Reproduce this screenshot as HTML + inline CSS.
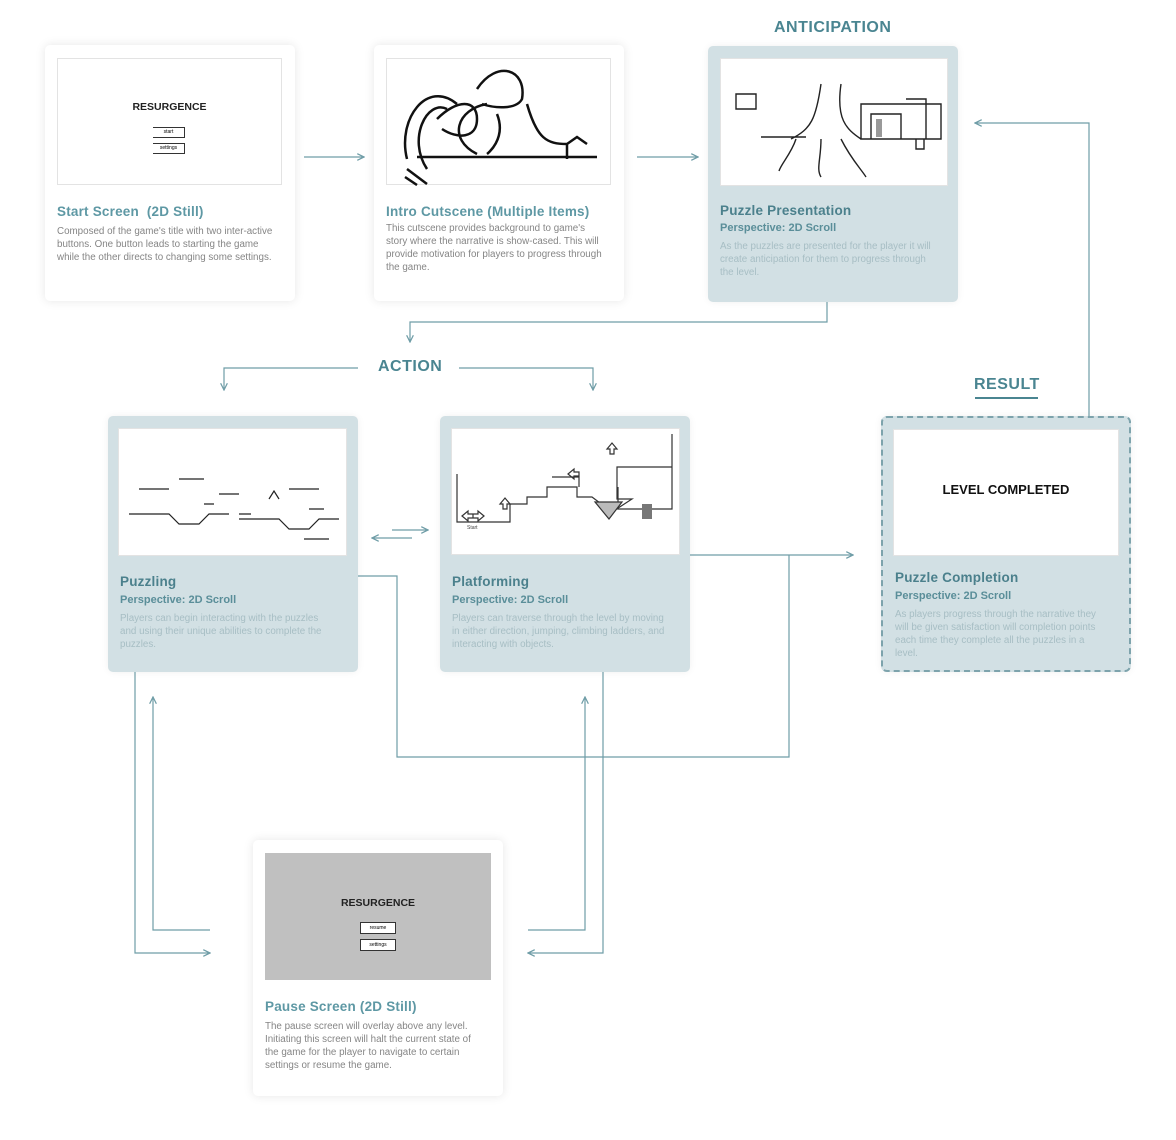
<!DOCTYPE html>
<html><head><meta charset="utf-8"><style>
*{margin:0;padding:0;box-sizing:border-box}
body{width:1176px;height:1140px;background:#fff;position:relative;font-family:"Liberation Sans",sans-serif;overflow:hidden}
.card{position:absolute;width:250px;height:256px;border-radius:5px;background:#fff;box-shadow:0 0 10px rgba(0,0,0,.1)}
.blue{background:#d2e0e4;box-shadow:0 0 8px rgba(0,0,0,.06)}
.img{position:absolute;background:#fff;border:1px solid #e3e3e3}
.t{position:absolute;left:12px;font-size:13.5px;font-weight:bold;color:#5e98a4;letter-spacing:.2px}
.blue .t{color:#4b808c}
.p{position:absolute;left:12px;font-size:9.8px;line-height:13px;color:#858585;width:222px}
.blue .p{color:#a7bec4;width:214px}
.s{position:absolute;left:12px;font-size:11px;font-weight:bold;color:#5a8e99}
.h{position:absolute;font-size:16px;font-weight:bold;color:#4a8591;letter-spacing:.5px}
svg.ov{position:absolute;left:0;top:0}
</style></head><body>

<div class="card" style="left:45px;top:45px">
 <div class="img" style="left:12px;top:13px;width:225px;height:127px">
  <div style="position:absolute;left:0;right:0;top:42px;text-align:center;font-size:10.5px;font-weight:bold;color:#222">RESURGENCE</div>
  <div style="position:absolute;left:95px;top:68px;width:32px;height:11px;border:1px solid #333;border-left:none;font-size:5px;text-align:center;line-height:9px">start</div>
  <div style="position:absolute;left:95px;top:84px;width:32px;height:11px;border:1px solid #333;border-left:none;font-size:5px;text-align:center;line-height:9px">settings</div>
 </div>
 <div class="t" style="top:159px">Start Screen &nbsp;(2D Still)</div>
 <div class="p" style="top:180px">Composed of the game's title with two inter-active buttons. One button leads to starting the game while the other directs to changing some settings.</div>
</div>

<div class="card" style="left:374px;top:45px">
 <div class="img" style="left:12px;top:13px;width:225px;height:127px">
  <svg width="225" height="127" fill="none" stroke="#111" stroke-width="2.5">
   <path d="M30 98 L210 98"/>
   <path d="M70 45 C40 20 10 60 20 100 M60 50 C40 40 20 80 40 110 M50 60 C70 40 90 40 90 60 C90 80 70 80 55 70 M90 30 C110 0 140 10 135 40 C130 50 110 50 95 45 M100 45 C70 50 60 80 90 95 M110 55 C120 80 100 95 100 95 M140 45 C150 80 160 85 180 85 L190 78 L200 85 M180 85 L180 100"/>
   <path d="M20 110 L40 125 M18 118 L30 126"/>
  </svg>
 </div>
 <div class="t" style="top:159px">Intro Cutscene (Multiple Items)</div>
 <div class="p" style="top:177px">This cutscene provides background to game's story where the narrative is show-cased. This will provide motivation for players to progress through the game.</div>
</div>

<div class="card blue" style="left:708px;top:46px">
 <div class="img" style="left:12px;top:12px;width:228px;height:128px">
  <svg width="228" height="128" fill="none" stroke="#222" stroke-width="1.4">
   <path d="M15 35 h20 v15 h-20z M40 78 h45 M100 25 C95 60 90 70 70 80 M120 25 C115 60 125 70 140 80 M75 80 C70 95 60 105 58 112 M100 80 C100 100 95 110 100 118 M120 80 C130 100 140 110 145 118"/>
   <path d="M140 45 h80 v35 h-80z M150 55 h30 v25 h-30z M185 40 h20 v40 M195 80 v10 h8 v-10"/>
   <rect x="155" y="60" width="6" height="18" fill="#999" stroke="none"/>
  </svg>
 </div>
 <div class="t" style="top:157px">Puzzle Presentation</div>
 <div class="s" style="top:176px">Perspective: 2D Scroll</div>
 <div class="p" style="top:194px">As the puzzles are presented for the player it will create anticipation for them to progress through the level.</div>
</div>

<div class="card blue" style="left:108px;top:416px">
 <div class="img" style="left:10px;top:12px;width:229px;height:128px">
  <svg width="229" height="128" fill="none" stroke="#222" stroke-width="1.2">
   <path d="M10 85 h40 l10 10 h20 l10 -10 h20 M20 60 h30 M60 50 h25 M100 65 h20 M120 85 h12 M85 75 h10"/>
   <path d="M120 90 h40 l10 10 h20 l10 -10 h20 M150 70 l5 -8 l5 8 M170 60 h30 M190 80 h15 M185 110 h25"/>
  </svg>
 </div>
 <div class="t" style="top:158px">Puzzling</div>
 <div class="s" style="top:178px">Perspective: 2D Scroll</div>
 <div class="p" style="top:196px">Players can begin interacting with the puzzles and using their unique abilities to complete the puzzles.</div>
</div>

<div class="card blue" style="left:440px;top:416px">
 <div class="img" style="left:11px;top:12px;width:229px;height:127px">
  <svg width="229" height="127" fill="none" stroke="#333" stroke-width="1.2">
   <path d="M5 45 V93 H58 V75 H75 V68 H95 V58 H125 V68 H140 L160 83 L180 70 H170 H165 V38 H220 V5 M220 38 V80 H166 V58"/>
   <path d="M100 48 h27 v10"/>
   <path d="M143 73 L157 90 L170 73Z" fill="#bbb"/>
   <path d="M10 87 l6 -5 v3 h5 v4 h-5 v3z M32 87 l-6 -5 v3 h-5 v4 h5 v3z M116 45 l6 -5 v3 h5 v4 h-5 v3z"/>
   <path d="M155 20 l5 -6 l5 6 h-3 v5 h-4 v-5z M48 75 l5 -6 l5 6 h-3 v5 h-4 v-5z"/>
   <rect x="190" y="75" width="10" height="15" fill="#777" stroke="none"/>
  </svg>
  <div style="position:absolute;left:15px;top:96px;font-size:5px;color:#444">Start</div>
 </div>
 <div class="t" style="top:158px">Platforming</div>
 <div class="s" style="top:178px">Perspective: 2D Scroll</div>
 <div class="p" style="top:196px">Players can traverse through the level by moving in either direction, jumping, climbing ladders, and interacting with objects.</div>
</div>

<div class="card blue" style="left:881px;top:416px;border:2px dashed #7da3ac;border-radius:6px">
 <div class="img" style="left:10px;top:11px;width:226px;height:127px">
  <div style="position:absolute;left:0;right:0;top:52px;text-align:center;font-size:13px;font-weight:bold;color:#111">LEVEL COMPLETED</div>
 </div>
 <div class="t" style="top:152px">Puzzle Completion</div>
 <div class="s" style="top:172px">Perspective: 2D Scroll</div>
 <div class="p" style="top:190px">As players progress through the narrative they will be given satisfaction will completion points each time they complete all the puzzles in a level.</div>
</div>

<div class="card" style="left:253px;top:840px">
 <div class="img" style="left:12px;top:13px;width:226px;height:127px;background:#c0c0c0;border-color:#c0c0c0">
  <div style="position:absolute;left:0;right:0;top:43px;text-align:center;font-size:10.5px;font-weight:bold;color:#222">RESURGENCE</div>
  <div style="position:absolute;left:94px;top:68px;width:36px;height:12px;border:1px solid #333;background:#fff;font-size:5px;text-align:center;line-height:10px">resume</div>
  <div style="position:absolute;left:94px;top:85px;width:36px;height:12px;border:1px solid #333;background:#fff;font-size:5px;text-align:center;line-height:10px">settings</div>
 </div>
 <div class="t" style="top:159px">Pause Screen (2D Still)</div>
 <div class="p" style="top:180px">The pause screen will overlay above any level. Initiating this screen will halt the current state of the game for the player to navigate to certain settings or resume the game.</div>
</div>

<div class="h" style="left:774px;top:19px">ANTICIPATION</div>
<div class="h" style="left:378px;top:358px">ACTION</div>
<div class="h" style="left:974px;top:376px">RESULT</div>
<div style="position:absolute;left:975px;top:397px;width:63px;height:2px;background:#4a8591"></div>

<svg class="ov" width="1176" height="1140" fill="none" stroke="#6f9da7" stroke-width="1.2">
 <defs><marker id="a" viewBox="0 0 10 10" refX="9" refY="5" markerWidth="7" markerHeight="7" orient="auto"><path d="M1 1 L9 5 L1 9" fill="none" stroke="#6f9da7" stroke-width="1.5"/></marker></defs>
 <g marker-end="url(#a)">
 <path d="M304 157 H364"/>
 <path d="M637 157 H698"/>
 <path d="M827 302 V322 H410 V342"/>
 <path d="M358 368 H224 V390"/>
 <path d="M459 368 H593 V390"/>
 <path d="M392 530 H428"/>
 <path d="M412 538 H372"/>
 <path d="M690 555 H853"/>
 <path d="M1089 416 V123 H975"/>
 <path d="M135 672 V953 H210"/>
 <path d="M210 930 H153 V697"/>
 <path d="M603 672 V953 H528"/>
 <path d="M528 930 H585 V697"/>
 </g>
 <path d="M358 576 H397 V757 H789 V555"/>
</svg>
</body></html>
